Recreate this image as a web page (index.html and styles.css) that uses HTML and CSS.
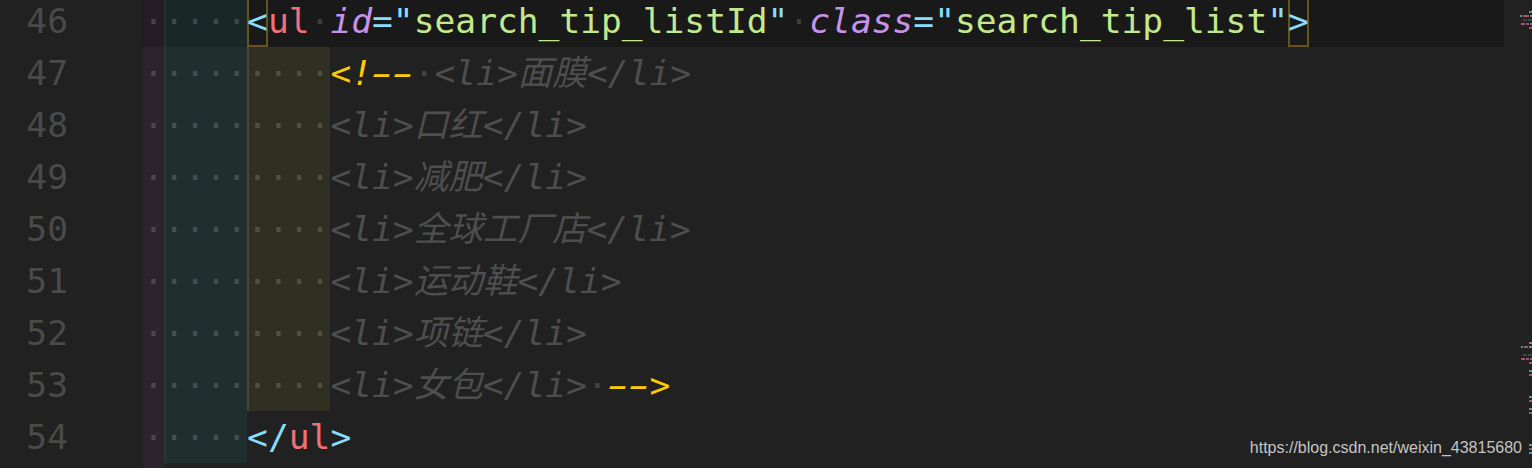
FILE: index.html
```html
<!DOCTYPE html>
<html lang="zh">
<head>
<meta charset="utf-8">
<title>editor</title>
<link rel="stylesheet" href="styles.css">
</head>
<body>
<div class="editor">
  <div class="lines">
    <div class="line cur">
      <div class="ln">46</div>
      <div class="code"><span class="i1 ws">·</span><span class="i2 ws">····</span><span class="bm p">&lt;</span><span class="tag">ul</span><span class="ws">·</span><span class="attr">id</span><span class="p">="</span><span class="str">search_tip_listId</span><span class="p">"</span><span class="ws">·</span><span class="attr">class</span><span class="p">="</span><span class="str">search_tip_list</span><span class="p">"</span><span class="bm p">&gt;</span></div>
    </div>
    <div class="line">
      <div class="ln">47</div>
      <div class="code"><span class="i1 ws">·</span><span class="i2 ws">····</span><span class="i3 guide ws">····</span><span class="cd">&lt;!<span class="dash">-</span><span class="dash">-</span></span><span class="ws">·</span><span class="cm">&lt;li&gt;面膜&lt;/li&gt;</span></div>
    </div>
    <div class="line">
      <div class="ln">48</div>
      <div class="code"><span class="i1 ws">·</span><span class="i2 ws">····</span><span class="i3 guide ws">····</span><span class="cm">&lt;li&gt;口红&lt;/li&gt;</span></div>
    </div>
    <div class="line">
      <div class="ln">49</div>
      <div class="code"><span class="i1 ws">·</span><span class="i2 ws">····</span><span class="i3 guide ws">····</span><span class="cm">&lt;li&gt;减肥&lt;/li&gt;</span></div>
    </div>
    <div class="line">
      <div class="ln">50</div>
      <div class="code"><span class="i1 ws">·</span><span class="i2 ws">····</span><span class="i3 guide ws">····</span><span class="cm">&lt;li&gt;全球工厂店&lt;/li&gt;</span></div>
    </div>
    <div class="line">
      <div class="ln">51</div>
      <div class="code"><span class="i1 ws">·</span><span class="i2 ws">····</span><span class="i3 guide ws">····</span><span class="cm">&lt;li&gt;运动鞋&lt;/li&gt;</span></div>
    </div>
    <div class="line">
      <div class="ln">52</div>
      <div class="code"><span class="i1 ws">·</span><span class="i2 ws">····</span><span class="i3 guide ws">····</span><span class="cm">&lt;li&gt;项链&lt;/li&gt;</span></div>
    </div>
    <div class="line">
      <div class="ln">53</div>
      <div class="code"><span class="i1 ws">·</span><span class="i2 ws">····</span><span class="i3 guide ws">····</span><span class="cm">&lt;li&gt;女包&lt;/li&gt;</span><span class="ws">·</span><span class="cd"><span class="dash">-</span><span class="dash">-</span>&gt;</span></div>
    </div>
    <div class="line">
      <div class="ln">54</div>
      <div class="code"><span class="i1 ws">·</span><span class="i2 ws">····</span><span class="p">&lt;/</span><span class="tag">ul</span><span class="p">&gt;</span></div>
    </div>
    <div class="line">
      <div class="ln"></div>
      <div class="code"><span class="i1 empty"></span></div>
    </div>
  </div>
  <div class="minimap">
    <div class="mm-group top">
      <div class="mm-row"><span class="b blue w3"></span></div>
      <div class="mm-row"><span class="b blue w2"></span><span class="b red w6"></span><span class="b blue w2"></span></div>
      <div class="mm-row"><span class="b grey w5"></span><span class="b grey w5"></span></div>
      <div class="mm-row"><span class="b red w5"></span><span class="b purple w3"></span><span class="b red w2"></span></div>
      <div class="mm-row"><span class="b red w3"></span></div>
    </div>
    <div class="mm-group mid">
      <div class="mm-row"><span class="b blue w3"></span></div>
      <div class="mm-row"><span class="b blue w2"></span><span class="b red w5"></span><span class="b blue w3"></span></div>
      <div class="mm-row gap"><span class="b grey w5"></span><span class="b grey w5"></span></div>
      <div class="mm-row"><span class="b red w5"></span><span class="b purple w3"></span><span class="b red w2"></span></div>
      <div class="mm-row"><span class="b red w3"></span></div>
      <div class="mm-row gap"><span class="b blue w3"></span></div>
      <div class="mm-row"><span class="b red w3"></span></div>
      <div class="mm-row gap2"><span class="b blue w3"></span></div>
      <div class="mm-row"><span class="b red w3"></span></div>
      <div class="mm-row gap"><span class="b blue w3"></span></div>
      <div class="mm-row"><span class="b red w3"></span></div>
      <div class="mm-row gap3"><span class="b blue w3"></span></div>
      <div class="mm-row"><span class="b red w3"></span></div>
      <div class="mm-row"><span class="b blue w3"></span></div>
    </div>
  </div>
  <div class="watermark">https://blog.csdn.net/weixin_43815680</div>
</div>
</body>
</html>
```

FILE: styles.css
```css
html, body {
  margin: 0;
  padding: 0;
  background: #212121;
  overflow: hidden;
}

.editor {
  position: relative;
  display: flex;
  width: 1532px;
  height: 468px;
  overflow: hidden;
  background: #212121;
}

.lines {
  flex: 1;
  margin-top: -5px;
  font-family: "DejaVu Sans Mono", "Noto Sans CJK SC", monospace;
  font-size: 34.6px;
}

.line {
  display: flex;
  height: 52px;
  line-height: 52px;
}

.ln {
  width: 142px;
  flex: none;
  box-sizing: border-box;
  padding-right: 74px;
  text-align: right;
  color: #4a4a4a;
}

.code {
  flex: 1;
  padding-left: 1px;
  white-space: pre;
  color: #eeffff;
}

.line.cur .code {
  background: #191919;
}

.ws { color: rgba(255, 255, 255, 0.17); }

.i1 {
  display: inline-block;
  height: 52px;
  vertical-align: top;
  background: rgba(140, 60, 170, 0.1);
}
.i1.empty { width: 20.83px; }
.i2 {
  display: inline-block;
  height: 52px;
  vertical-align: top;
  background: rgba(40, 200, 200, 0.08);
  box-shadow: inset 2px 0 0 rgba(255, 255, 255, 0.04);
}
.i3 {
  display: inline-block;
  height: 52px;
  vertical-align: top;
  background: rgba(255, 255, 64, 0.065);
}
.guide {
  box-shadow: inset 2px 0 0 #47473a;
}

.bm {
  display: inline-block;
  height: 52px;
  vertical-align: top;
  box-shadow: inset 0 0 0 2px #65541b;
}

.dash {
  display: inline-block;
  transform: scaleX(1.75);
}

.p { color: #89ddff; }
.tag { color: #f07178; }
.attr { color: #c792ea; font-style: italic; }
.str { color: #c3e88d; }
.cd { color: #ffcb00; font-style: italic; }
.cm { color: #4e4e4e; font-style: italic; }

.minimap {
  width: 28px;
  flex: none;
  display: flex;
  flex-direction: column;
}

.mm-group {
  display: flex;
  flex-direction: column;
  gap: 1px;
}
.mm-group.top { margin-top: 11px; }
.mm-group.mid { margin-top: 312px; }

.mm-row {
  display: flex;
  justify-content: flex-end;
  gap: 1px;
  height: 3px;
}
.mm-row.gap { margin-top: 4px; }
.mm-row.gap2 { margin-top: 18px; }
.mm-row.gap3 { margin-top: 28px; }

.b { display: block; height: 2px; }
.w2 { width: 2px; }
.w3 { width: 3px; }
.w5 { width: 4px; }
.w6 { width: 6px; }
.blue { background: #5f8ea0; }
.red { background: #a8565b; }
.grey { background: #444444; }
.purple { background: #7d5b96; }

.watermark {
  position: absolute;
  top: 440px;
  right: 10px;
  font-family: "Liberation Sans", Arial, sans-serif;
  font-size: 16px;
  line-height: 16px;
  color: #c4c4c4;
  white-space: nowrap;
}
```
